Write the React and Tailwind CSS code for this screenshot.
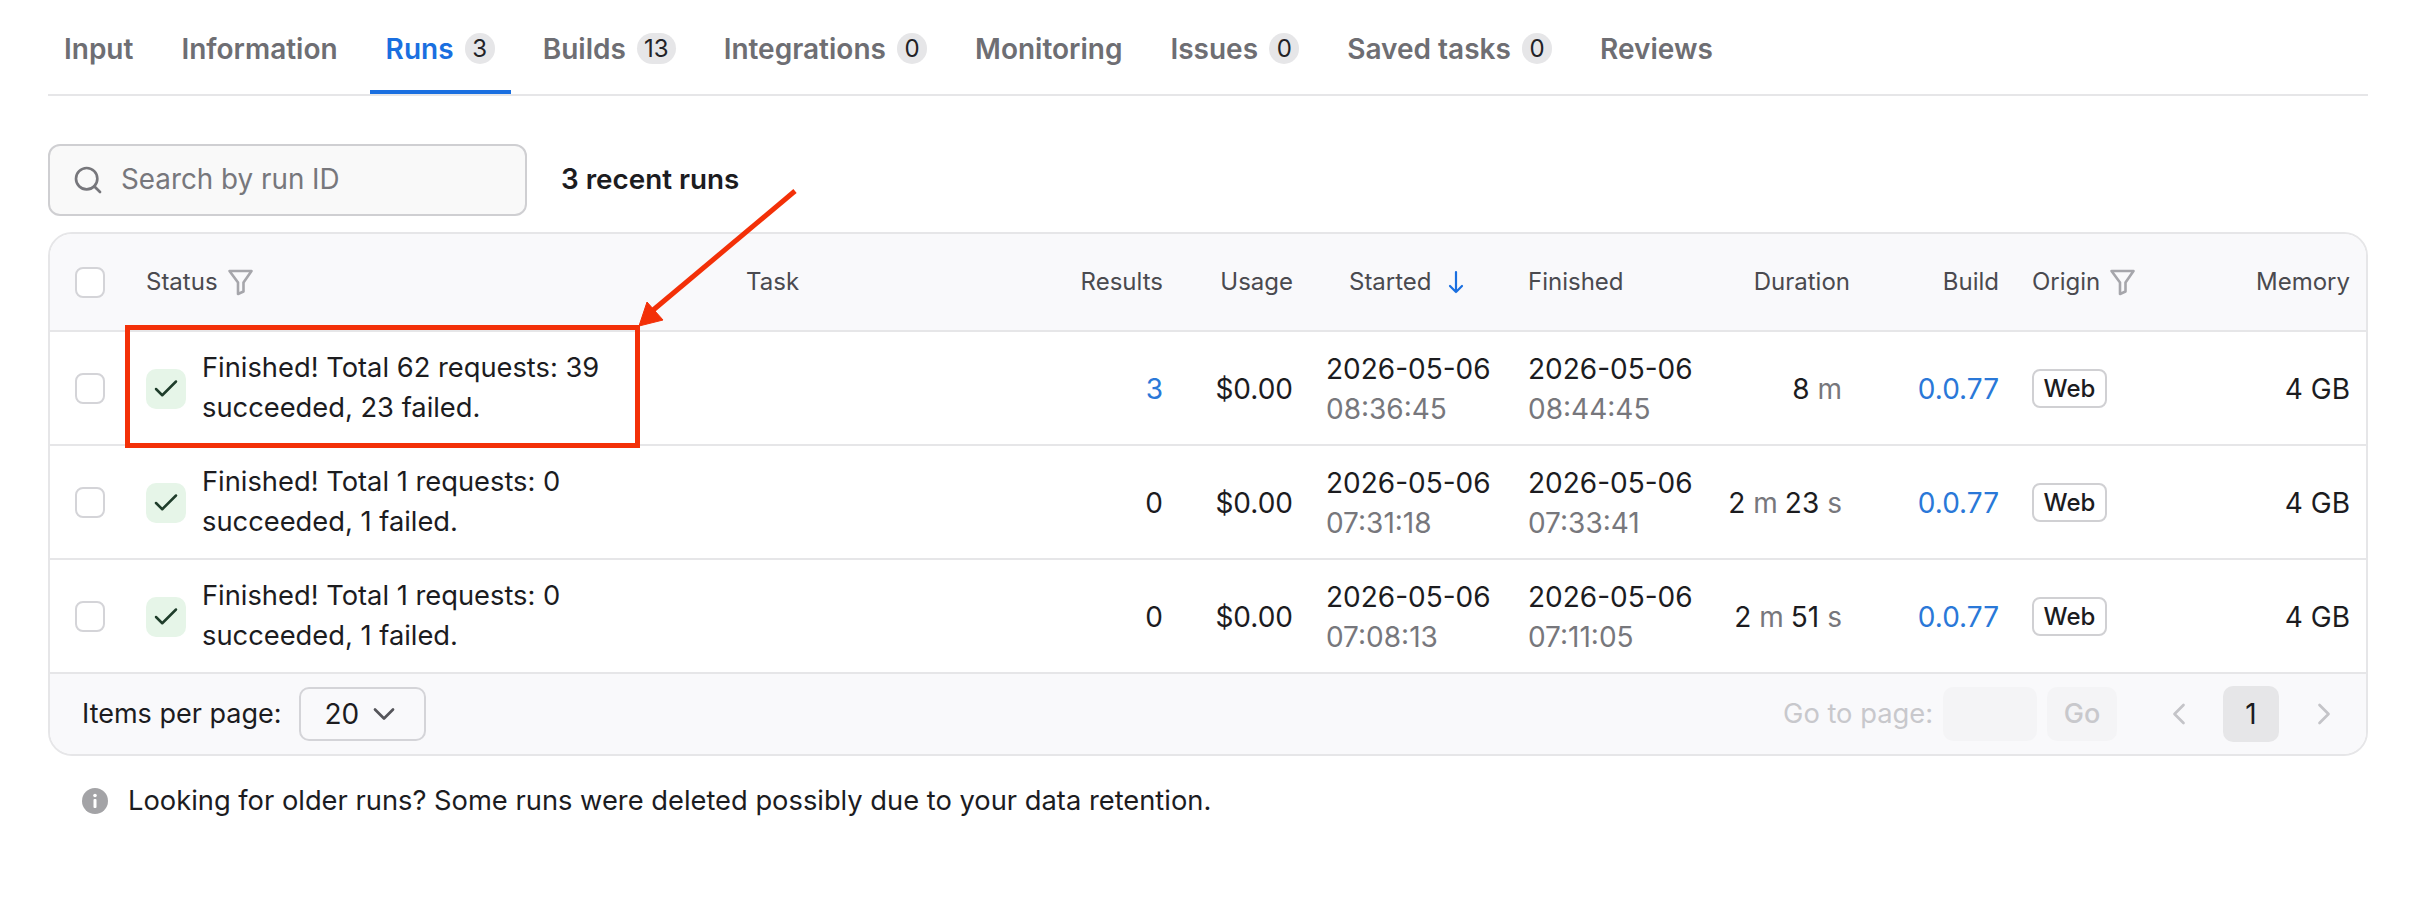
import React from "react";
import { Search, Check, ChevronDown, ChevronLeft, ChevronRight } from "lucide-react";

const rowGrid = "grid grid-cols-[71px_600px_317px_100px_130px_235px_173px_149px_149px_151px_200px] pl-[25px] items-center";

const tabs = [
  { label: "Input" },
  { label: "Information" },
  { label: "Runs", count: "3", active: true },
  { label: "Builds", count: "13" },
  { label: "Integrations", count: "0" },
  { label: "Monitoring" },
  { label: "Issues", count: "0" },
  { label: "Saved tasks", count: "0" },
  { label: "Reviews" },
];

const runs = [
  { l1: "Finished! Total 62 requests: 39", l2: "succeeded, 23 failed.", res: "3", link: true, sd: "08:36:45", fd: "08:44:45", dur: [["8", "m"]] },
  { l1: "Finished! Total 1 requests: 0", l2: "succeeded, 1 failed.", res: "0", sd: "07:31:18", fd: "07:33:41", dur: [["2", "m"], ["23", "s"]] },
  { l1: "Finished! Total 1 requests: 0", l2: "succeeded, 1 failed.", res: "0", sd: "07:08:13", fd: "07:11:05", dur: [["2", "m"], ["51", "s"]] },
];

function Funnel() {
  return (
    <svg width="27" height="27" viewBox="0 0 26 27" fill="none" stroke="#a6a6ab" strokeWidth="2.6" strokeLinejoin="round" className="shrink-0">
      <path d="M2 2H24L16 13.5V22.5L10.5 25V13.5Z" />
    </svg>
  );
}

function Box() {
  return <div className="w-[30px] h-[31px] rounded-[8px] border-2 border-[#d4d4d8] bg-white" />;
}

function Tab({ label, count, active }) {
  return (
    <div className={`h-[94px] px-[16px] flex items-center gap-[11.2px] ${active ? "pt-[8px] text-[#1a6fe0] border-b-[4px] border-[#1a6fe0]" : "pt-[4px] text-[#6e6e73]"}`}>
      <span className="text-[28px] font-semibold">{label}</span>
      {count && (
        <span className="-mt-[1px] h-[31px] min-w-[30px] px-[7px] rounded-full bg-[#e6e6e8] flex items-center justify-center text-[24px] font-normal text-[#222226]">
          {count}
        </span>
      )}
    </div>
  );
}

export default function App() {
  return (
    <div className="relative w-[2420px] h-[924px] overflow-hidden bg-white pl-[48px] pr-[52px] font-['Inter',sans-serif] text-[#1c1c1f]">
      {/* tabs */}
      <div className="flex gap-[16px] border-b-2 border-[#e6e6e8] h-[96px]">
        {tabs.map((t) => (
          <Tab key={t.label} {...t} />
        ))}
      </div>

      {/* search */}
      <div className="mt-[48px] h-[72px] flex items-center gap-[34px]">
        <div className="w-[479px] h-[72px] rounded-[12px] border-2 border-[#cfcfd2] bg-[#f9f9f9] flex items-center pl-[22px] gap-[17px]">
          <Search size={32} strokeWidth={2} className="text-[#77777c]" />
          <span className="text-[27.8px] text-[#77777c]">Search by run ID</span>
        </div>
        <span className="text-[27.8px] font-semibold">3 recent runs</span>
      </div>

      {/* table */}
      <div className="mt-[16px] rounded-[24px] border-2 border-[#e6e6e8] overflow-hidden">
        <div className={`${rowGrid} h-[98px] bg-[#f9f9fb] border-b-2 border-[#e6e6e8] text-[24px] text-[#4a4a4f]`}>
          <Box />
          <div className="flex items-center gap-[9px]">Status <Funnel /></div>
          <div>Task</div>
          <div className="text-right">Results</div>
          <div className="text-right">Usage</div>
          <div className="pl-[56px] flex items-center gap-[16px]">
            Started
            <svg width="16" height="24" viewBox="0 0 16 24" fill="none" stroke="#1a6fe0" strokeWidth="2.2" strokeLinecap="round" strokeLinejoin="round" className="shrink-0">
              <path d="M8 2V22M2 16L8 22L14 16" />
            </svg>
          </div>
          <div>Finished</div>
          <div className="text-right">Duration</div>
          <div className="text-right">Build</div>
          <div className="pl-[33px] flex items-center gap-[9px]">Origin <Funnel /></div>
          <div className="text-right">Memory</div>
        </div>

        {runs.map((r) => (
          <div key={r.sd} className={`${rowGrid} h-[114px] pt-[1px] border-b-2 border-[#e6e6e8] text-[28px] leading-[40px]`}>
            <Box />
            <div className="flex items-center gap-[16px]">
              <div className="w-[40px] h-[40px] rounded-[10px] bg-[#e6f5e8] flex items-center justify-center">
                <Check size={30} strokeWidth={2} className="text-[#1f3d2b]" />
              </div>
              <div className="text-[27.3px] -mt-[2px]">
                <div>{r.l1}</div>
                <div>{r.l2}</div>
              </div>
            </div>
            <div />
            <div className={`text-right ${r.link ? "text-[#2a78d8]" : ""}`}>{r.res}</div>
            <div className="text-right">$0.00</div>
            <div className="pl-[33px]">
              <div>2026-05-06</div>
              <div className="text-[#77777c]">{r.sd}</div>
            </div>
            <div>
              <div>2026-05-06</div>
              <div className="text-[#77777c]">{r.fd}</div>
            </div>
            <div className="text-right pr-[8px] flex justify-end gap-[7px]">
              {r.dur.map(([n, u]) => (
                <span key={u} className="flex gap-[8px]">
                  <span>{n}</span>
                  <span className="text-[#77777c]">{u}</span>
                </span>
              ))}
            </div>
            <div className="text-right text-[#2a78d8]">0.0.77</div>
            <div className="pl-[33px]">
              <div className="w-[75px] h-[39px] rounded-[8px] border-2 border-[#d0d0d3] flex items-center justify-center text-[24px] font-medium">Web</div>
            </div>
            <div className="text-right">4 GB</div>
          </div>
        ))}

        <div className="h-[80px] bg-[#f9f9fb] flex items-center justify-between pl-[32px] pr-[24px]">
          <div className="flex items-center gap-[17px]">
            <span className="text-[27px]">Items per page:</span>
            <div className="w-[127px] h-[54px] rounded-[10px] border-2 border-[#d4d4d8] flex items-center pl-[24px] gap-[7px]">
              <span className="text-[28px]">20</span>
              <ChevronDown size={36} strokeWidth={1.8} className="text-[#55555a]" />
            </div>
          </div>
          <div className="flex items-center">
            <span className="text-[27.3px] text-[#c8c8cc] mr-[10px]">Go to page:</span>
            <div className="w-[94px] h-[54px] rounded-[10px] bg-[#f4f4f6] mr-[10px]" />
            <div className="w-[70px] h-[54px] rounded-[10px] bg-[#f4f4f6] flex items-center justify-center text-[27px] font-medium text-[#c8c8cc] mr-[44px]">Go</div>
            <ChevronLeft size={36} strokeWidth={1.8} className="text-[#c4c4c8]" />
            <div className="w-[56px] h-[56px] rounded-[10px] bg-[#e6e6e8] flex items-center justify-center text-[28px] ml-[26px] mr-[27px]">1</div>
            <ChevronRight size={36} strokeWidth={1.8} className="text-[#c4c4c8]" />
          </div>
        </div>
      </div>

      {/* info */}
      <div className="mt-[29px] h-[32px] pl-[34px] flex items-center gap-[20px] text-[27.3px]">
        <svg width="26" height="26" viewBox="0 0 26 26" className="shrink-0">
          <circle cx="13" cy="13" r="13" fill="#a3a3a6" />
          <circle cx="13" cy="7.5" r="1.8" fill="#fff" />
          <rect x="11.5" y="11" width="3" height="9" rx="1" fill="#fff" />
        </svg>
        <span>Looking for older runs? Some runs were deleted possibly due to your data retention.</span>
      </div>

      {/* annotation */}
      <div className="absolute left-[125px] top-[325px] w-[515px] h-[123px] border-[5px] border-[#f33008]" />
      <svg className="absolute left-0 top-0 pointer-events-none" width="2420" height="924" fill="none">
        <path d="M795 191L652 311" stroke="#f33008" strokeWidth="5" />
        <path d="M639 326L647 302L663 320Z" fill="#f33008" stroke="#f33008" strokeWidth="1" />
      </svg>
    </div>
  );
}
